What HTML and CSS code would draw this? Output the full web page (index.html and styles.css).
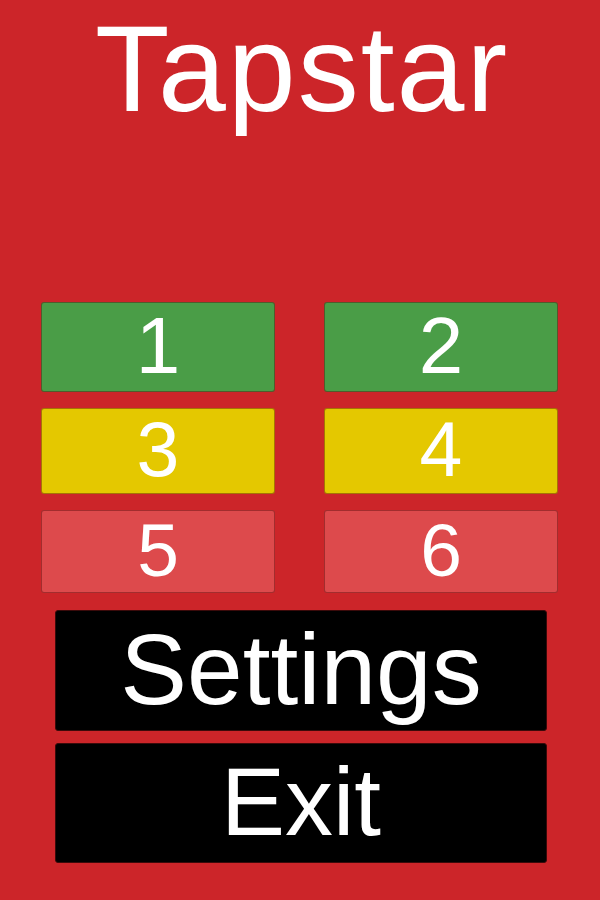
FILE: index.html
```
<!DOCTYPE html>
<html>
<head>
<meta charset="utf-8">
<link rel="stylesheet" href="styles.css">
</head>
<body>
<div class="screen">
  <h1 class="title">Tapstar</h1>
  <div class="levels">
    <div class="level green r1">1</div>
    <div class="level green r1">2</div>
    <div class="level yellow r2">3</div>
    <div class="level yellow r2">4</div>
    <div class="level pink r3">5</div>
    <div class="level pink r3">6</div>
  </div>
  <div class="menu">
    <div class="btn settings">Settings</div>
    <div class="btn exit">Exit</div>
  </div>
</div>
</body>
</html>
```

FILE: styles.css
```
html, body {
  margin: 0;
  padding: 0;
  background: #cc2529;
}
.screen {
  width: 600px;
  height: 900px;
  font-family: "Liberation Sans", Arial, sans-serif;
  color: #ffffff;
  display: flex;
  flex-direction: column;
}
.title {
  margin: 8px 0 0 0;
  font-weight: normal;
  font-size: 122px;
  line-height: 122px;
  letter-spacing: 2px;
  text-align: center;
  padding-left: 4px;
}
.levels {
  margin-top: 172px;
  padding: 0 42px 0 41px;
  display: grid;
  grid-template-columns: 1fr 1fr;
  grid-template-rows: 90px 86px 83px;
  column-gap: 49px;
  row-gap: 16px;
}
.level {
  box-sizing: border-box;
  border: 1px solid rgba(90, 10, 10, 0.45);
  border-radius: 3px;
  display: flex;
  align-items: center;
  justify-content: center;
  line-height: 1;
  padding-bottom: 3px;
}
.green { background: #4a9d47; }
.yellow { background: #e4c800; }
.pink { background: #dd4a4c; }
.r1 { font-size: 80px; }
.r2 { font-size: 77px; }
.r3 { font-size: 75px; }
.menu {
  margin-top: 17px;
  padding: 0 53px 0 55px;
  display: flex;
  flex-direction: column;
  gap: 12px;
}
.btn {
  box-sizing: border-box;
  background: #000000;
  border: 1px solid #3a0a0a;
  border-radius: 3px;
  display: flex;
  align-items: center;
  justify-content: center;
  line-height: 1;
  padding-bottom: 3px;
}
.settings {
  height: 121px;
  font-size: 100px;
}
.exit {
  height: 120px;
  font-size: 96px;
}
```
